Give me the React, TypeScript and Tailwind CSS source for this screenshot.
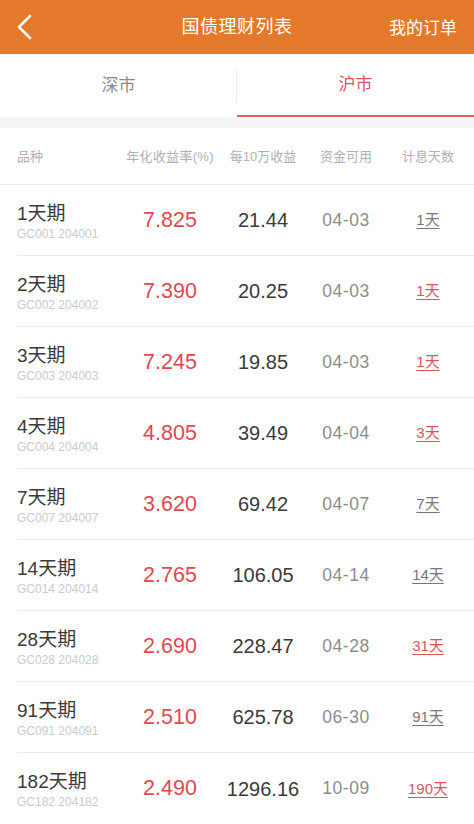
import React from "react";

type Row = {
  name: string;
  code: string;
  rate: string;
  value: string;
  date: string;
  days: string;
  hot: boolean;
};

const rows: Row[] = [
  { name: "1天期", code: "GC001 204001", rate: "7.825", value: "21.44", date: "04-03", days: "1天", hot: false },
  { name: "2天期", code: "GC002 204002", rate: "7.390", value: "20.25", date: "04-03", days: "1天", hot: true },
  { name: "3天期", code: "GC003 204003", rate: "7.245", value: "19.85", date: "04-03", days: "1天", hot: true },
  { name: "4天期", code: "GC004 204004", rate: "4.805", value: "39.49", date: "04-04", days: "3天", hot: true },
  { name: "7天期", code: "GC007 204007", rate: "3.620", value: "69.42", date: "04-07", days: "7天", hot: false },
  { name: "14天期", code: "GC014 204014", rate: "2.765", value: "106.05", date: "04-14", days: "14天", hot: false },
  { name: "28天期", code: "GC028 204028", rate: "2.690", value: "228.47", date: "04-28", days: "31天", hot: true },
  { name: "91天期", code: "GC091 204091", rate: "2.510", value: "625.78", date: "06-30", days: "91天", hot: false },
  { name: "182天期", code: "GC182 204182", rate: "2.490", value: "1296.16", date: "10-09", days: "190天", hot: true },
];

const cols = "grid grid-cols-[103px_100px_86px_80px_1fr] items-center";

export default function App() {
  return (
    <div className="w-[474px] h-[824px] overflow-hidden bg-white font-['Liberation_Sans','Noto_Sans_CJK_SC',sans-serif]">
      {/* Top bar */}
      <div className="relative h-[54px] bg-[#e4792b] flex items-center justify-center">
        <svg className="absolute left-[15px] top-[14px]" width="20" height="26" viewBox="0 0 20 26" fill="none">
          <path d="M15 2 L4 13 L15 24" stroke="white" strokeWidth="2.6" strokeLinecap="round" strokeLinejoin="round" />
        </svg>
        <span className="text-white text-[18px] tracking-[0.5px]">国债理财列表</span>
        <span className="absolute right-[17px] top-[16px] text-white text-[17px]">我的订单</span>
      </div>

      {/* Tabs */}
      <div className="flex h-[63px]">
        <div className="flex-1 flex items-center justify-center relative">
          <span className="text-[17px] text-[#8a8a8a]">深市</span>
          <div className="absolute right-0 top-[16px] h-[32px] w-px bg-[#ececec]" />
        </div>
        <div className="flex-1 flex items-center justify-center border-b-2 border-[#d9626b]">
          <span className="text-[17px] text-[#d9535f]">沪市</span>
        </div>
      </div>
      <div className="h-[11px] bg-[#f4f4f7]" />

      {/* Column header */}
      <div className={`${cols} h-[57px] pl-[17px] pr-[4px] pt-[2px] text-[13px] text-[#b0b0b0] border-b border-[#ededed]`}>
        <span>品种</span>
        <span className="text-center whitespace-nowrap tracking-[0.3px]">年化收益率(%)</span>
        <span className="text-center whitespace-nowrap">每10万收益</span>
        <span className="text-center">资金可用</span>
        <span className="text-center">计息天数</span>
      </div>

      {/* Rows */}
      <div>
        {rows.map((r, i) => (
          <div key={r.code} className="pl-[17px]">
            <div className={`${cols} h-[71px] pr-[4px] ${i < rows.length - 1 ? "border-b border-[#ececec]" : ""}`}>
              <div className="flex flex-col pt-[3px]">
                <span className="text-[19px] leading-[23px] text-[#3a3a3a]">{r.name}</span>
                <span className="text-[12px] leading-[16px] text-[#cbcbcb] mt-[1px] whitespace-nowrap">{r.code}</span>
              </div>
              <span className="text-center text-[21.5px] text-[#e2474f]">{r.rate}</span>
              <span className="text-center text-[20px] text-[#3a3a3a]">{r.value}</span>
              <span className="text-center text-[17.5px] text-[#8c8c8c] tracking-[0.5px]">{r.date}</span>
              <span className="text-center">
                <span className={`text-[15px] underline underline-offset-[3px] decoration-1 ${r.hot ? "text-[#d9535f] decoration-[#d9535f]" : "text-[#777] decoration-[#777]"}`}>
                  {r.days}
                </span>
              </span>
            </div>
          </div>
        ))}
      </div>
    </div>
  );
}
